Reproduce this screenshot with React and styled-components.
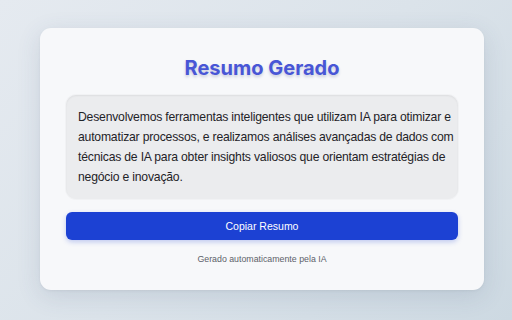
import styled, { createGlobalStyle } from "styled-components";

const GlobalStyle = createGlobalStyle`
  html, body {
    margin: 0;
    padding: 0;
  }
  body {
    font-family: "Liberation Sans", Arial, sans-serif;
  }
`

const Page = styled.div`
  box-sizing: border-box;
  width: 512px;
  height: 320px;
  padding: 28px 28px 30px 40px;
  display: flex;
  align-items: stretch;
  background: linear-gradient(135deg, #e5eaf0 0%, #dbe3ea 50%, #cdd9e2 100%);
`

const Card = styled.div`
  box-sizing: border-box;
  flex: 1;
  display: flex;
  flex-direction: column;
  padding: 26px 26px 0;
  background: #f7f8fa;
  border-radius: 11px;
  box-shadow: 0 6px 24px rgba(60, 80, 110, 0.14), 0 1px 3px rgba(0, 0, 0, 0.05);
`

const Title = styled.h1`
  margin: 0 0 13px;
  text-align: center;
  font-family: Inter, "Liberation Sans", sans-serif;
  font-size: 20px;
  line-height: 28px;
  font-weight: 700;
  color: #4856d6;
  text-shadow: 0 2px 3px rgba(40, 50, 120, 0.22);
`

const Summary = styled.div`
  box-sizing: border-box;
  padding: 12px 2px 12px 12px;
  background: #ebecee;
  border-radius: 10px;
  box-shadow: inset 0 1px 2px rgba(0, 0, 0, 0.06), 0 0 0 1px rgba(0, 0, 0, 0.025);
  font-size: 12.2px;
  line-height: 20px;
  letter-spacing: -0.2px;
  color: #1f2328;
`

const CopyButton = styled.button`
  margin-top: 13px;
  height: 28px;
  border: none;
  border-radius: 6px;
  background: #1c41d3;
  color: #ffffff;
  font-family: "Liberation Sans", Arial, sans-serif;
  font-size: 10.5px;
  font-weight: 500;
  box-shadow: 0 2px 5px rgba(28, 65, 211, 0.25);
  cursor: pointer;
`

const Footer = styled.p`
  margin: 12px 0 0;
  text-align: center;
  font-size: 8.8px;
  line-height: 14px;
  color: #5c6169;
`

export default function App() {
  return (
    <>
      <GlobalStyle />
      <Page>
        <Card>
          <Title>Resumo Gerado</Title>
          <Summary>
            Desenvolvemos ferramentas inteligentes que utilizam IA para otimizar e
            automatizar processos, e realizamos análises avançadas de dados com
            técnicas de IA para obter insights valiosos que orientam estratégias de
            negócio e inovação.
          </Summary>
          <CopyButton>Copiar Resumo</CopyButton>
          <Footer>Gerado automaticamente pela IA</Footer>
        </Card>
      </Page>
    </>
  );
}
